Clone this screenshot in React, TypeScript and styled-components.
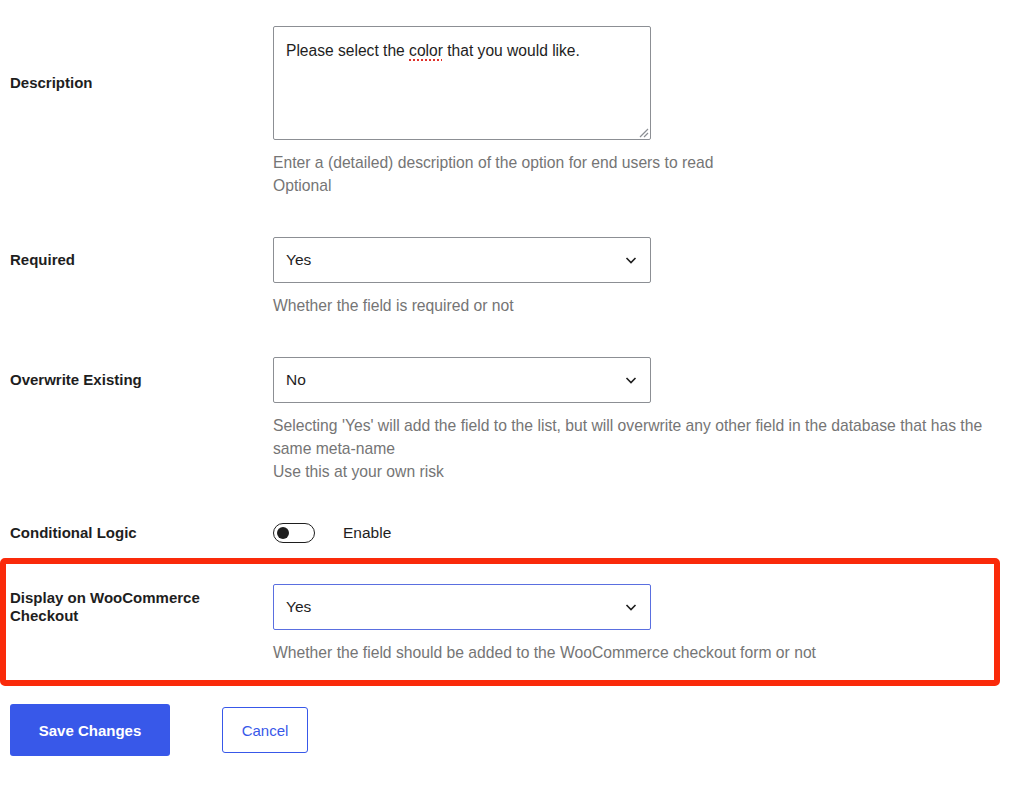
import React from "react";
import styled, { createGlobalStyle } from "styled-components";

const GlobalStyle = createGlobalStyle`
  html, body {
    margin: 0;
    padding: 0;
    background: #ffffff;
  }
  body {
    font-family: "Liberation Sans", Arial, sans-serif;
    color: #1e1e1e;
  }
`;

const Page = styled.main`
  padding: 26px 24px 40px 10px;
  display: flex;
  flex-direction: column;
  gap: 40px;
`;

const Row = styled.div`
  display: grid;
  grid-template-columns: 263px 378px 1fr;
  grid-template-rows: auto auto;
  align-items: center;
`;

const HighlightBox = styled.div`
  margin: -25px 0 0 -10px;
  width: 1000px;
  box-sizing: border-box;
  border: 6px solid #fa2a0a;
  border-radius: 5px;
  padding: 20px 0 16px 4px;
`;

const Label = styled.label`
  grid-column: 1;
  grid-row: 1;
  max-width: 210px;
  font-size: 15px;
  font-weight: 700;
  line-height: 18px;
  color: #1e1e1e;
`;

const Help = styled.p`
  grid-column: 2 / span 2;
  grid-row: 2;
  margin: 11px 0 0;
  font-size: 15.7px;
  line-height: 23px;
  color: #757575;
`;

const TextArea = styled.div`
  grid-column: 2;
  grid-row: 1;
  position: relative;
  box-sizing: border-box;
  height: 114px;
  border: 1px solid #8c8f94;
  border-radius: 2px;
  padding: 14px 12px;
  font-size: 15.6px;
  line-height: 20px;
  color: #1e1e1e;
`;

const Misspelled = styled.span`
  text-decoration: underline dotted #e0302a;
  text-decoration-thickness: 1.5px;
  text-underline-offset: 3px;
`;

const Grip = styled.svg`
  position: absolute;
  right: 1px;
  bottom: 1px;
`;

const Select = styled.div<{ $focus?: boolean }>`
  grid-column: 2;
  grid-row: 1;
  box-sizing: border-box;
  height: 46px;
  border: 1px solid ${(p) => (p.$focus ? "#5a6fe0" : "#8c8f94")};
  border-radius: 2px;
  padding: 0 12px;
  display: flex;
  align-items: center;
  justify-content: space-between;
  font-size: 15.5px;
  color: #1e1e1e;
`;

const ToggleLine = styled.div`
  grid-column: 2 / span 2;
  grid-row: 1;
  display: flex;
  align-items: center;
  gap: 28px;
  font-size: 15.5px;
  color: #1e1e1e;
`;

const Toggle = styled.span`
  box-sizing: border-box;
  width: 42px;
  height: 20px;
  border: 1.5px solid #1e1e1e;
  border-radius: 10px;
  display: flex;
  align-items: center;
  padding-left: 3px;

  &::before {
    content: "";
    width: 12px;
    height: 12px;
    border-radius: 50%;
    background: #1e1e1e;
  }
`;

const Actions = styled.div`
  display: flex;
  align-items: center;
  gap: 52px;
  margin-top: -22px;
`;

const Button = styled.button<{ $primary?: boolean }>`
  box-sizing: border-box;
  font-family: "Liberation Sans", Arial, sans-serif;
  font-size: 15px;
  border-radius: 3px;
  cursor: pointer;
  ${(p) =>
    p.$primary
      ? `
    width: 160px;
    height: 52px;
    background: #3858e9;
    color: #ffffff;
    font-weight: 700;
    border: none;
  `
      : `
    width: 86px;
    height: 46px;
    background: #ffffff;
    color: #3858e9;
    border: 1px solid #3858e9;
  `}
`;

const Chevron = () => (
  <svg width="14" height="14" viewBox="0 0 14 14">
    <path d="M2.5 5 L7 9.5 L11.5 5" fill="none" stroke="#1e1e1e" strokeWidth="1.6" />
  </svg>
);

export default function App() {
  return (
    <>
      <GlobalStyle />
      <Page>
        <Row>
          <Label>Description</Label>
          <TextArea>
            Please select the <Misspelled>color</Misspelled> that you would like.
            <Grip width="12" height="12" viewBox="0 0 12 12">
              <path d="M11 3 L3 11 M11 7 L7 11" stroke="#8c8f94" strokeWidth="1.2" />
            </Grip>
          </TextArea>
          <Help>
            Enter a (detailed) description of the option for end users to read
            <br />
            Optional
          </Help>
        </Row>

        <Row>
          <Label>Required</Label>
          <Select>
            Yes
            <Chevron />
          </Select>
          <Help>Whether the field is required or not</Help>
        </Row>

        <Row>
          <Label>Overwrite Existing</Label>
          <Select>
            No
            <Chevron />
          </Select>
          <Help>
            Selecting 'Yes' will add the field to the list, but will overwrite any other field in the
            database that has the same meta-name
            <br />
            Use this at your own risk
          </Help>
        </Row>

        <Row>
          <Label>Conditional Logic</Label>
          <ToggleLine>
            <Toggle />
            Enable
          </ToggleLine>
        </Row>

        <HighlightBox>
          <Row>
            <Label>Display on WooCommerce Checkout</Label>
            <Select $focus>
              Yes
              <Chevron />
            </Select>
            <Help>Whether the field should be added to the WooCommerce checkout form or not</Help>
          </Row>
        </HighlightBox>

        <Actions>
          <Button $primary>Save Changes</Button>
          <Button>Cancel</Button>
        </Actions>
      </Page>
    </>
  );
}
